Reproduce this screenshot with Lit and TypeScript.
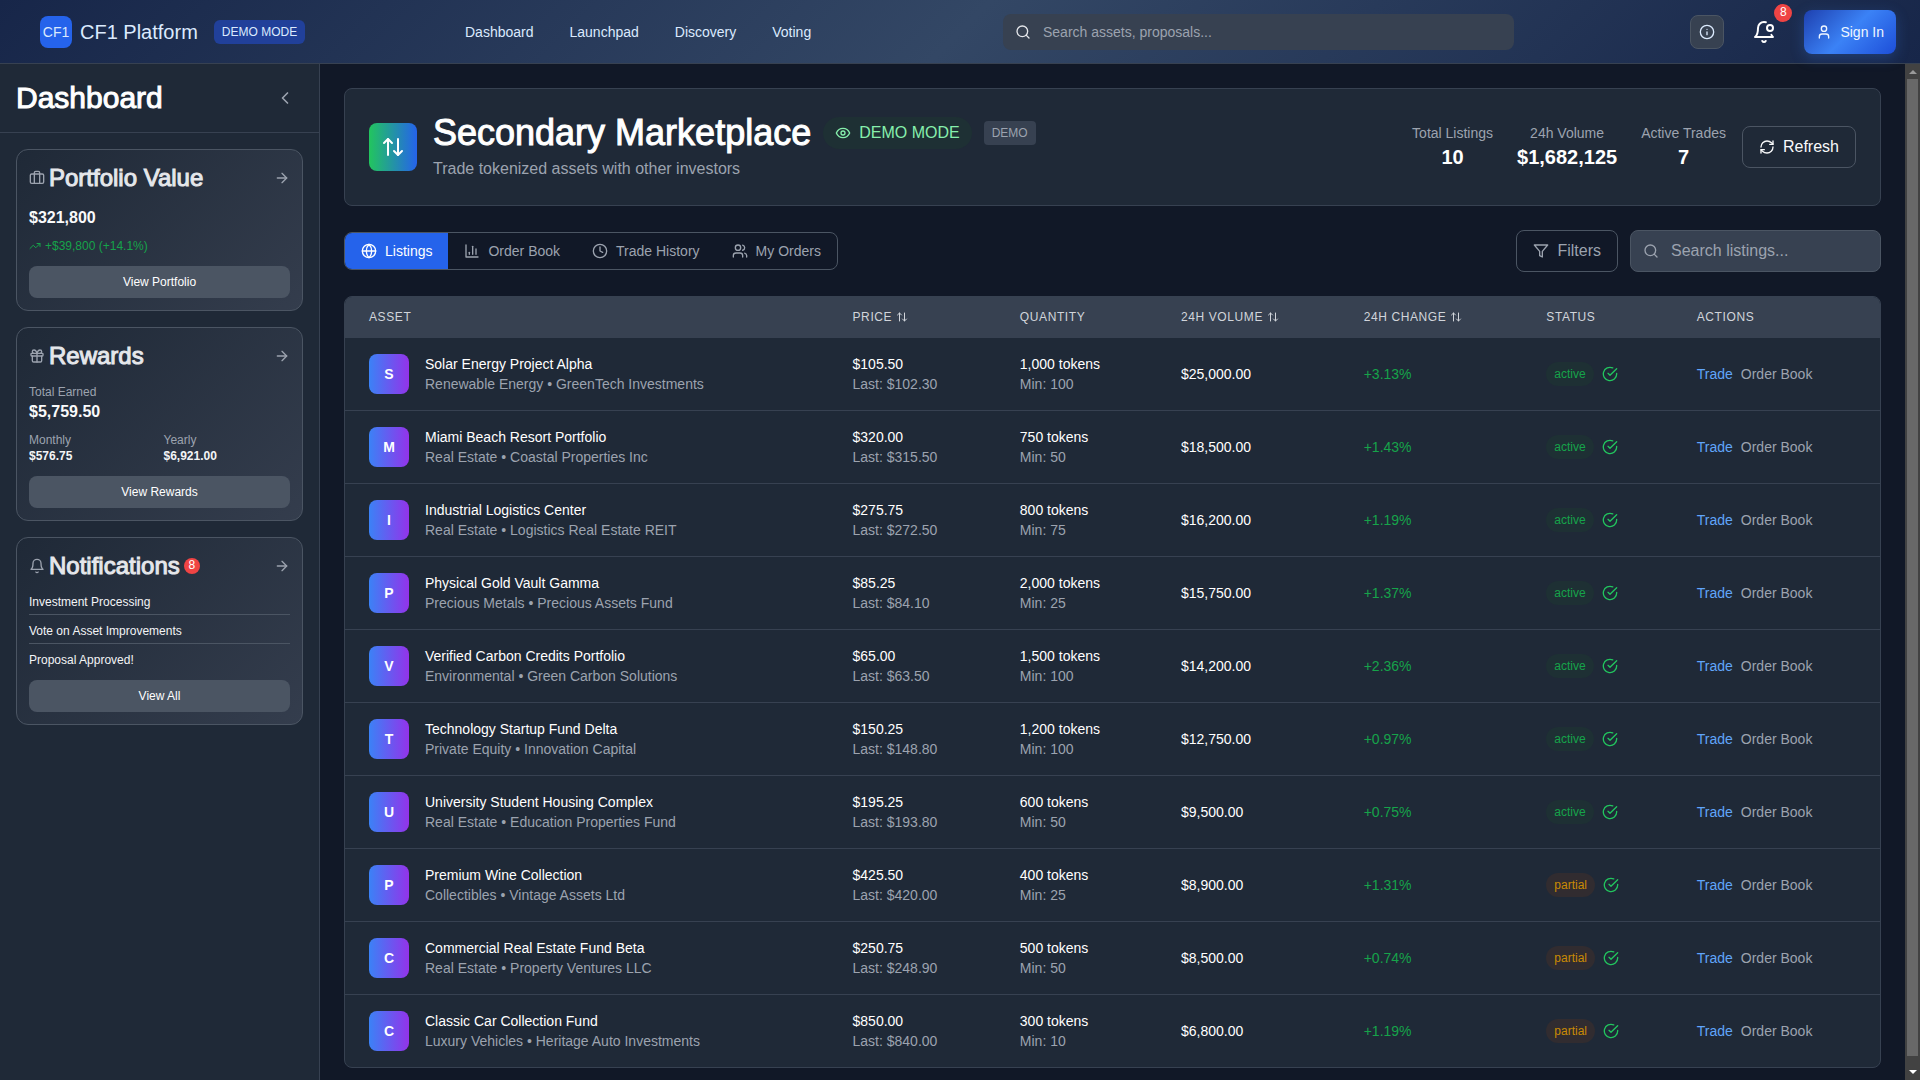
import { LitElement, html, css, svg } from "lit";
import { customElement, property, state } from "lit/decorators.js";
import { classMap } from "lit/directives/class-map.js";

const icons = {
  search: svg`<circle cx="11" cy="11" r="8"/><path d="m21 21-4.3-4.3"/>`,
  info: svg`<circle cx="12" cy="12" r="10"/><path d="M12 16v-4"/><path d="M12 8h.01"/>`,
  bellDot: svg`<path d="M19.4 14.9C20.2 16.4 21 17 21 17H3s3-2 3-9c0-3.3 2.7-6 6-6 .7 0 1.3.1 1.9.3"/><path d="M10.3 21a1.94 1.94 0 0 0 3.4 0"/><circle cx="18" cy="8" r="3"/>`,
  bell: svg`<path d="M6 8a6 6 0 0 1 12 0c0 7 3 9 3 9H3s3-2 3-9"/><path d="M10.3 21a1.94 1.94 0 0 0 3.4 0"/>`,
  user: svg`<path d="M19 21v-2a4 4 0 0 0-4-4H9a4 4 0 0 0-4 4v2"/><circle cx="12" cy="7" r="4"/>`,
  chevronLeft: svg`<path d="m15 18-6-6 6-6"/>`,
  arrowRight: svg`<path d="M5 12h14"/><path d="m12 5 7 7-7 7"/>`,
  briefcase: svg`<path d="M16 20V4a2 2 0 0 0-2-2h-4a2 2 0 0 0-2 2v16"/><rect width="20" height="14" x="2" y="6" rx="2"/>`,
  gift: svg`<rect x="3" y="8" width="18" height="4" rx="1"/><path d="M12 8v13"/><path d="M19 12v7a2 2 0 0 1-2 2H7a2 2 0 0 1-2-2v-7"/><path d="M7.5 8a2.5 2.5 0 0 1 0-5A4.8 8 0 0 1 12 8a4.8 8 0 0 1 4.5-5 2.5 2.5 0 0 1 0 5"/>`,
  trendingUp: svg`<path d="m22 7-8.500 8.500-5-5L2 17"/><path d="M16 7h6v6"/>`,
  arrowUpDown: svg`<path d="m21 16-4 4-4-4"/><path d="M17 20V4"/><path d="m3 8 4-4 4 4"/><path d="M7 4v16"/>`,
  eye: svg`<path d="M2 12s3-7 10-7 10 7 10 7-3 7-10 7-10-7-10-7Z"/><circle cx="12" cy="12" r="3"/>`,
  refresh: svg`<path d="M3 12a9 9 0 0 1 9-9 9.750 9.750 0 0 1 6.740 2.740L21 8"/><path d="M21 3v5h-5"/><path d="M21 12a9 9 0 0 1-9 9 9.750 9.750 0 0 1-6.740-2.740L3 16"/><path d="M8 16H3v5"/>`,
  globe: svg`<circle cx="12" cy="12" r="10"/><path d="M12 2a14.500 14.500 0 0 0 0 20 14.500 14.500 0 0 0 0-20"/><path d="M2 12h20"/>`,
  chart: svg`<path d="M3 3v18h18"/><path d="M18 17V9"/><path d="M13 17V5"/><path d="M8 17v-3"/>`,
  clock: svg`<circle cx="12" cy="12" r="10"/><path d="M12 6v6l4 2"/>`,
  users: svg`<path d="M16 21v-2a4 4 0 0 0-4-4H6a4 4 0 0 0-4 4v2"/><circle cx="9" cy="7" r="4"/><path d="M22 21v-2a4 4 0 0 0-3-3.870"/><path d="M16 3.130a4 4 0 0 1 0 7.750"/>`,
  funnel: svg`<path d="M22 3H2l8 9.460V19l4 2v-8.540L22 3z"/>`,
  checkCircle: svg`<path d="M22 11.080V12a10 10 0 1 1-5.930-9.140"/><path d="m9 11 3 3L22 4"/>`,
};
type IconName = keyof typeof icons;

const icon = (name: IconName, size = 16) => html`<svg
  class="icon" width=${size} height=${size} viewBox="0 0 24 24" aria-hidden="true">${icons[name]}</svg>`;

const base = css`
  :host { display: block; box-sizing: border-box; }
  *, *::before, *::after { box-sizing: border-box; }
  h1, h2, p, dl, dd, dt, ul { margin: 0; padding: 0; font-weight: 400; }
  ul { list-style: none; }
  a { color: inherit; text-decoration: none; }
  button, input { font: inherit; color: inherit; margin: 0; }
  button { padding: 0; border: 0; background: none; cursor: pointer; }
  .icon {
    display: block; flex: none; fill: none; stroke: currentColor;
    stroke-width: 2; stroke-linecap: round; stroke-linejoin: round;
  }
`;

@customElement("cf-header")
class CfHeader extends LitElement {
  static styles = [base, css`
    :host {
      display: grid; grid-template-columns: 425px 1fr auto; align-items: center;
      height: 64px; padding: 0 24px 0 40px; border-bottom: 1px solid #374151;
      background: linear-gradient(135deg, #172649 0%, #334765 50%, #172649 100%);
      font-size: 14px; line-height: 20px; color: #dbeafe;
    }
    .brand { display: flex; align-items: center; gap: 8px; }
    .logo {
      display: grid; place-items: center; width: 32px; height: 32px;
      border-radius: 8px; background: #2563eb;
    }
    .name { font-size: 20px; line-height: 28px; }
    .mode {
      margin-left: 8px; padding: 4px 8px; border-radius: 6px;
      background: #21409a; font-size: 12px; line-height: 16px;
    }
    .middle { display: grid; grid-template-columns: 1fr 1fr; align-items: center; }
    nav { display: flex; gap: 36px; }
    .search {
      display: flex; align-items: center; gap: 12px; height: 36px; padding: 0 12px;
      border-radius: 8px; background: #374151; color: #e5e7eb;
    }
    .search input { flex: 1; min-width: 0; padding: 0; border: 0; outline: 0; background: none; }
    .search input::placeholder { color: #9ca3af; opacity: 1; }
    .middle { margin-right: 176px; grid-template-columns: 538px minmax(0, 1fr); }
    .actions { display: flex; align-items: center; }
    .info {
      display: grid; place-items: center; width: 34px; height: 34px;
      border: 1px solid #4b5563; border-radius: 8px; background: #374151;
    }
    .bell { position: relative; margin: 0 28px; color: #fff; }
    .count {
      position: absolute; left: 22px; top: -16px; width: 18px; height: 18px;
      border-radius: 9px; background: #ef4444; font-size: 12px; line-height: 17px;
    }
    .signin {
      display: flex; align-items: center; gap: 8px; height: 44px; padding: 0 12px;
      border-radius: 8px; color: #eff6ff; font-weight: 500;
      background: linear-gradient(135deg, #1e40af 0%, #3b82f6 50%, #1d4ed8 100%);
      box-shadow: 0 4px 14px rgba(59, 130, 246, 0.25);
    }
  `];
  render() {
    return html`
      <div class="brand">
        <span class="logo">CF1</span>
        <span class="name">CF1 Platform</span>
        <span class="mode">DEMO MODE</span>
      </div>
      <div class="middle">
        <nav>
          ${["Dashboard", "Launchpad", "Discovery", "Voting"].map((t) => html`<a href="#">${t}</a>`)}
        </nav>
        <label class="search">
          ${icon("search")}
          <input type="search" aria-label="Search assets and proposals" placeholder="Search assets, proposals..." />
        </label>
      </div>
      <div class="actions">
        <button class="info" aria-label="Information">${icon("info")}</button>
        <button class="bell" aria-label="Notifications">${icon("bellDot", 24)}<span class="count">8</span></button>
        <button class="signin">${icon("user")}Sign In</button>
      </div>
    `;
  }
}

@customElement("cf-card")
class CfCard extends LitElement {
  @property() heading = "";
  @property() icon: IconName = "bell";
  @property() action = "";
  @property({ type: Number }) count = 0;
  static styles = [base, css`
    :host {
      display: flex; flex-direction: column; gap: 12px; padding: 12px;
      border: 1px solid #4b5563; border-radius: 12px;
      background: linear-gradient(135deg, #1f2937 0%, #343d4d 100%);
    }
    .head { display: flex; align-items: center; gap: 4px; color: #9ca3af; }
    h2 { font-size: 24px; line-height: 32px; color: #e5e7eb; -webkit-text-stroke: 1px #e5e7eb; }
    .count {
      width: 16px; height: 16px; border-radius: 8px; background: #ef4444;
      color: #fff; font-size: 12px; line-height: 15px; text-align: center;
    }
    .go { margin-left: auto; }
    .action {
      height: 32px; border-radius: 8px; background: #4b5563;
      color: #fff; font-size: 12px; line-height: 16px;
    }
  `];
  render() {
    return html`
      <div class="head">
        ${icon(this.icon)}
        <h2>${this.heading}</h2>
        ${this.count ? html`<span class="count">${this.count}</span>` : null}
        <a class="go" href="#" aria-label="Open ${this.heading}">${icon("arrowRight")}</a>
      </div>
      <slot></slot>
      <button class="action">${this.action}</button>
    `;
  }
}

@customElement("cf-sidebar")
class CfSidebar extends LitElement {
  static styles = [base, css`
    :host { border-right: 1px solid #374151; background: #1f2937; font-size: 12px; line-height: 16px; }
    .top {
      display: flex; align-items: center; justify-content: space-between;
      padding: 16px; border-bottom: 1px solid #374151;
    }
    h1 { font-size: 30px; line-height: 36px; color: #fff; -webkit-text-stroke: 1px #fff; }
    .collapse { padding: 8px; color: #9ca3af; }
    .cards { display: flex; flex-direction: column; gap: 16px; padding: 16px; }
    .stack { display: flex; flex-direction: column; gap: 8px; }
    .amount { font-size: 16px; line-height: 24px; font-weight: 700; color: #f9fafb; }
    .gain { display: flex; align-items: center; gap: 4px; color: #16a34a; }
    .label { color: #9ca3af; }
    .pair { display: grid; grid-template-columns: 1fr 1fr; gap: 8px; }
    .value { font-weight: 700; color: #f3f4f6; }
    li { padding-bottom: 4px; border-bottom: 1px solid #4b5563; color: #f3f4f6; }
    li:last-child { padding: 0; border: 0; }
  `];
  render() {
    return html`
      <div class="top">
        <h1>Dashboard</h1>
        <button class="collapse" aria-label="Collapse sidebar">${icon("chevronLeft", 20)}</button>
      </div>
      <div class="cards">
        <cf-card heading="Portfolio Value" icon="briefcase" action="View Portfolio">
          <div class="stack">
            <p class="amount">$321,800</p>
            <p class="gain">${icon("trendingUp", 12)}+$39,800 (+14.1%)</p>
          </div>
        </cf-card>
        <cf-card heading="Rewards" icon="gift" action="View Rewards">
          <div class="stack">
            <div><p class="label">Total Earned</p><p class="amount">$5,759.50</p></div>
            <div class="pair">
              <div><p class="label">Monthly</p><p class="value">$576.75</p></div>
              <div><p class="label">Yearly</p><p class="value">$6,921.00</p></div>
            </div>
          </div>
        </cf-card>
        <cf-card heading="Notifications" icon="bell" action="View All" .count=${8}>
          <ul class="stack">
            <li>Investment Processing</li>
            <li>Vote on Asset Improvements</li>
            <li>Proposal Approved!</li>
          </ul>
        </cf-card>
      </div>
    `;
  }
}

interface Listing {
  name: string; kind: string; price: string; last: string;
  tokens: string; min: number; volume: string; change: string; status: string;
}
const row = (name: string, kind: string, price: string, last: string, tokens: string,
  min: number, volume: string, change: string, status = "active"): Listing =>
  ({ name, kind, price, last, tokens, min, volume, change, status });

const listings: Listing[] = [
  row("Solar Energy Project Alpha", "Renewable Energy • GreenTech Investments", "105.50", "102.30", "1,000", 100, "25,000.00", "3.13"),
  row("Miami Beach Resort Portfolio", "Real Estate • Coastal Properties Inc", "320.00", "315.50", "750", 50, "18,500.00", "1.43"),
  row("Industrial Logistics Center", "Real Estate • Logistics Real Estate REIT", "275.75", "272.50", "800", 75, "16,200.00", "1.19"),
  row("Physical Gold Vault Gamma", "Precious Metals • Precious Assets Fund", "85.25", "84.10", "2,000", 25, "15,750.00", "1.37"),
  row("Verified Carbon Credits Portfolio", "Environmental • Green Carbon Solutions", "65.00", "63.50", "1,500", 100, "14,200.00", "2.36"),
  row("Technology Startup Fund Delta", "Private Equity • Innovation Capital", "150.25", "148.80", "1,200", 100, "12,750.00", "0.97"),
  row("University Student Housing Complex", "Real Estate • Education Properties Fund", "195.25", "193.80", "600", 50, "9,500.00", "0.75"),
  row("Premium Wine Collection", "Collectibles • Vintage Assets Ltd", "425.50", "420.00", "400", 25, "8,900.00", "1.31", "partial"),
  row("Commercial Real Estate Fund Beta", "Real Estate • Property Ventures LLC", "250.75", "248.90", "500", 50, "8,500.00", "0.74", "partial"),
  row("Classic Car Collection Fund", "Luxury Vehicles • Heritage Auto Investments", "850.00", "840.00", "300", 10, "6,800.00", "1.19", "partial"),
];

@customElement("cf-listings")
class CfListings extends LitElement {
  static styles = [base, css`
    :host {
      overflow: hidden; border: 1px solid #374151; border-radius: 8px;
      background: #1f2937; font-size: 14px; line-height: 20px; color: #fff;
    }
    table { width: 100%; border-collapse: separate; border-spacing: 0; table-layout: fixed; }
    .c-asset { width: 31.5%; }
    .c-price { width: 10.9%; }
    .c-qty { width: 10.5%; }
    .c-num { width: 11.9%; }
    .c-status { width: 9.8%; }
    th {
      padding: 12px 24px; background: #374151; color: #d1d5db; text-align: left;
      font-size: 12px; line-height: 16px; font-weight: 400; letter-spacing: 0.05em;
    }
    .sort { display: flex; align-items: center; gap: 4px; letter-spacing: inherit; }
    td { padding: 16px 0 16px 24px; border-top: 1px solid #374151; white-space: nowrap; }
    .asset { display: flex; align-items: center; gap: 16px; }
    .avatar {
      display: grid; place-items: center; width: 40px; height: 40px; flex: none;
      border-radius: 8px; background: linear-gradient(to right, #3b82f6, #9333ea); font-weight: 700;
    }
    .sub { color: #9ca3af; }
    .change { color: #16a34a; }
    .status, .actions { display: flex; align-items: center; gap: 8px; }
    .status { color: #22c55e; }
    .pill {
      padding: 4px 8px; border-radius: 12px; font-size: 12px; line-height: 16px;
      background: #1e3034; color: #16a34a;
    }
    .pill.partial { background: #312c30; color: #ca8a04; }
    .trade { color: #60a5fa; }
    .book { color: #9ca3af; }
  `];
  private sortable(text: string) {
    return html`<button class="sort">${text}${icon("arrowUpDown", 12)}</button>`;
  }
  render() {
    return html`
      <table>
        <colgroup>
          <col class="c-asset" /><col class="c-price" /><col class="c-qty" /><col class="c-num" />
          <col class="c-num" /><col class="c-status" /><col />
        </colgroup>
        <thead>
          <tr>
            <th>ASSET</th><th>${this.sortable("PRICE")}</th><th>QUANTITY</th>
            <th>${this.sortable("24H VOLUME")}</th><th>${this.sortable("24H CHANGE")}</th>
            <th>STATUS</th><th>ACTIONS</th>
          </tr>
        </thead>
        <tbody>
          ${listings.map((l) => html`
            <tr>
              <td>
                <div class="asset">
                  <span class="avatar">${l.name[0]}</span>
                  <div><p>${l.name}</p><p class="sub">${l.kind}</p></div>
                </div>
              </td>
              <td><p>$${l.price}</p><p class="sub">Last: $${l.last}</p></td>
              <td><p>${l.tokens} tokens</p><p class="sub">Min: ${l.min}</p></td>
              <td>$${l.volume}</td>
              <td class="change">+${l.change}%</td>
              <td>
                <div class="status">
                  <span class=${classMap({ pill: true, partial: l.status === "partial" })}>${l.status}</span>
                  ${icon("checkCircle")}
                </div>
              </td>
              <td>
                <div class="actions">
                  <button class="trade">Trade</button><button class="book">Order Book</button>
                </div>
              </td>
            </tr>`)}
        </tbody>
      </table>
    `;
  }
}

@customElement("cf-market")
class CfMarket extends LitElement {
  @state() private tab = "Listings";
  static styles = [base, css`
    :host { display: flex; flex-direction: column; gap: 24px; padding: 24px; font-size: 14px; line-height: 20px; }
    .hero {
      display: flex; align-items: center; gap: 16px; padding: 24px;
      border: 1px solid #374151; border-radius: 8px; background: #1f2937;
    }
    .emblem {
      display: grid; place-items: center; width: 48px; height: 48px; border-radius: 8px;
      background: linear-gradient(to right, #22c55e, #2563eb); color: #fff;
    }
    .titles { display: flex; flex-direction: column; gap: 4px; margin-right: auto; }
    .line { display: flex; align-items: center; gap: 12px; }
    h1 { font-size: 36px; line-height: 40px; color: #fff; -webkit-text-stroke: 1px #fff; }
    .pill {
      display: flex; align-items: center; gap: 8px; padding: 4px 12px; border-radius: 16px;
      background: #1e3034; color: #86efac; font-size: 16px; line-height: 24px;
    }
    .tag {
      padding: 4px 8px; border-radius: 4px; background: #374151; color: #9ca3af;
      font-size: 12px; line-height: 16px;
    }
    .lead { font-size: 16px; line-height: 24px; color: #9ca3af; }
    .stats { display: flex; gap: 24px; text-align: center; }
    dt { color: #9ca3af; }
    dd { font-size: 20px; line-height: 28px; font-weight: 700; color: #fff; }
    .btn {
      display: flex; align-items: center; gap: 8px; padding: 8px 16px;
      border: 1px solid #4b5563; border-radius: 8px; font-size: 16px; line-height: 24px;
    }
    .refresh { color: #f9fafb; }
    .bar { display: flex; align-items: center; gap: 12px; color: #9ca3af; }
    .tabs {
      display: flex; margin-right: auto; overflow: hidden;
      border: 1px solid #4b5563; border-radius: 8px;
    }
    .tab { display: flex; align-items: center; gap: 8px; padding: 8px 16px; }
    .tab.on { background: #2563eb; color: #fff; }
    .find {
      display: flex; align-items: center; gap: 12px; width: 251px; padding: 8px 12px;
      border: 1px solid #4b5563; border-radius: 8px; background: #374151;
    }
    .find input {
      flex: 1; min-width: 0; height: 24px; padding: 0; border: 0; outline: 0;
      background: none; font-size: 16px; line-height: 24px;
    }
    .find input::placeholder { color: #9ca3af; opacity: 1; }
  `];
  render() {
    const tabs: [string, IconName][] = [
      ["Listings", "globe"], ["Order Book", "chart"], ["Trade History", "clock"], ["My Orders", "users"],
    ];
    return html`
      <section class="hero">
        <span class="emblem">${icon("arrowUpDown", 24)}</span>
        <div class="titles">
          <div class="line">
            <h1>Secondary Marketplace</h1>
            <span class="pill">${icon("eye")}DEMO MODE</span>
            <span class="tag">DEMO</span>
          </div>
          <p class="lead">Trade tokenized assets with other investors</p>
        </div>
        <dl class="stats">
          <div><dt>Total Listings</dt><dd>10</dd></div>
          <div><dt>24h Volume</dt><dd>$1,682,125</dd></div>
          <div><dt>Active Trades</dt><dd>7</dd></div>
        </dl>
        <button class="btn refresh">${icon("refresh")}Refresh</button>
      </section>
      <div class="bar">
        <div class="tabs">
          ${tabs.map(([name, glyph]) => html`
            <button class=${classMap({ tab: true, on: this.tab === name })}
              @click=${() => (this.tab = name)}>${icon(glyph)}${name}</button>`)}
        </div>
        <button class="btn">${icon("funnel")}Filters</button>
        <label class="find">
          ${icon("search")}
          <input type="text" aria-label="Search listings" placeholder="Search listings..." />
        </label>
      </div>
      <cf-listings></cf-listings>
    `;
  }
}

@customElement("app-root")
class AppRoot extends LitElement {
  static styles = [base, css`
    :host {
      display: flex; flex-direction: column; height: 100vh; overflow: hidden;
      background: #111827; font-family: "Liberation Sans", Arial, sans-serif;
    }
    cf-header { flex: none; }
    .body { flex: 1; min-height: 0; display: grid; grid-template-columns: 320px minmax(0, 1fr) 15px; }
    main { min-height: 0; overflow: hidden; }
    .rail {
      display: flex; flex-direction: column; align-items: center; justify-content: space-between;
      padding: 6px 0; background: #424242;
    }
    .thumb { flex: 1; width: 11px; margin: 5px 0 14px; background: #686868; }
    .arrow { border: 4px solid transparent; }
    .up { border-top: 0; border-bottom-color: #9a9a9a; }
    .down { border-bottom: 0; border-top-color: #fff; }
  `];
  render() {
    return html`
      <cf-header></cf-header>
      <div class="body">
        <cf-sidebar></cf-sidebar>
        <main><cf-market></cf-market></main>
        <div class="rail" aria-hidden="true">
          <span class="arrow up"></span><span class="thumb"></span><span class="arrow down"></span>
        </div>
      </div>
    `;
  }
}
